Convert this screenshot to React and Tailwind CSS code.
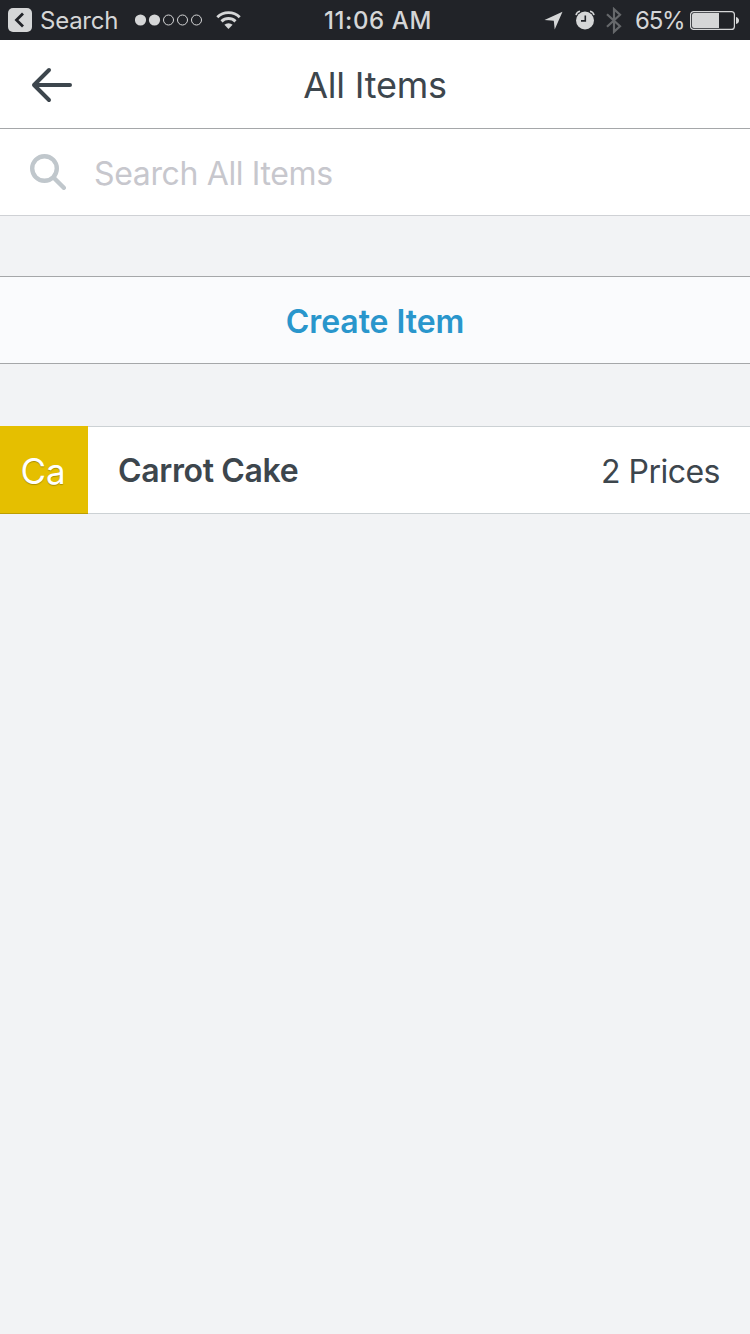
import React from 'react'

const signal = [true, true, false, false, false]

const items = [
  { id: 1, abbr: 'Ca', name: 'Carrot Cake', price: '2 Prices' }
]

function StatusBar() {
  return (
    <div className="flex h-10 items-center bg-[#212328] pl-2 pr-[11px] text-[#d5d6d7]">
      <div className="flex w-[316px] items-center">
        <svg className="h-6 w-6" viewBox="0 0 24 24" fill="none">
          <rect width="24" height="24" rx="5" fill="#d5d6d7" />
          <path d="M15 5.5L8.5 12l6.5 6.5" stroke="#212328" strokeWidth="2.8" />
        </svg>
        <span className="ml-2 w-[78px] whitespace-nowrap pt-px text-2xl leading-10 tracking-[-0.25px]">Search</span>
        <svg className="ml-[17px] h-3 w-[68px]" viewBox="0 0 68 12" fill="none">
          {signal.map((on, i) => (
            <circle
              key={i}
              cx={5.5 + i * 14}
              cy="6"
              r={on ? 5.6 : 5}
              fill={on ? '#d5d6d7' : 'none'}
              stroke={on ? 'none' : '#d5d6d7'}
            />
          ))}
        </svg>
        <svg className="ml-[13px] h-[18px] w-[25px]" viewBox="0 0 25 18" fill="none" stroke="#d5d6d7" strokeWidth="2.9">
          <path d="M1.3 6.2a16 16 0 0 1 22.4 0" />
          <path d="M5.5 10.4a10 10 0 0 1 14 0" />
          <path d="M12.5 18l-4.1-4.2a5.9 5.9 0 0 1 8.2 0z" fill="#d5d6d7" stroke="none" />
        </svg>
      </div>

      <span className="whitespace-nowrap pt-0.5 text-2xl font-medium leading-10 tracking-[0.6px]">11:06 AM</span>

      <div className="ml-auto flex items-center">
        <svg className="h-[19px] w-[19px]" viewBox="0 0 19 19" fill="#d5d6d7">
          <path d="M18.5 .8L10.7 18.6 9.8 9.8 .5 8.9z" />
        </svg>
        <svg className="ml-3 h-5 w-5" viewBox="0 0 20 20" fill="none">
          <circle cx="10" cy="10.5" r="9" fill="#d5d6d7" />
          <path d="M1 5.2A5 5 0 0 1 5 1.3M19 5.2a5 5 0 0 0-4-3.9" stroke="#d5d6d7" strokeWidth="1.5" />
          <path d="M10.3 5.5v5.4H6" stroke="#212328" strokeWidth="1.6" />
        </svg>
        <svg className="ml-[11px] h-[27px] w-4" viewBox="0 0 16 27" fill="none" stroke="#66686b" strokeWidth="2.2">
          <path d="M1 7.2l13 12L8 24.8V2.2l6 5.6-13 12" />
        </svg>
        <span className="ml-[13px] w-[49px] whitespace-nowrap pt-0.5 text-2xl leading-10 tracking-[-1.2px]">65%</span>
        <svg className="ml-[6px] h-[19px] w-[49px]" viewBox="0 0 49 19" fill="none">
          <rect x=".6" y=".6" width="43.8" height="17.8" rx="3" stroke="#d5d6d7" strokeWidth="1.2" />
          <path d="M4 2h25v15H4a2 2 0 0 1-2-2V4a2 2 0 0 1 2-2z" fill="#d5d6d7" />
          <path d="M46 6q3 1 3 3.5T46 13z" fill="#d5d6d7" />
        </svg>
      </div>
    </div>
  )
}

export default function App() {
  return (
    <div className="min-h-screen bg-[#f2f3f5] font-['Inter',sans-serif] text-[#3d464d]">
      <StatusBar />

      {/* Header */}
      <header className="grid h-[89px] grid-cols-[1fr_auto_1fr] items-center border-b border-[#a5a7a9] bg-white px-[31px]">
        <button type="button" aria-label="Back" className="pt-0.5">
          <svg className="h-9 w-[42px]" viewBox="0 0 42 36" fill="none" stroke="#3d464d" strokeWidth="4" strokeLinecap="round" strokeLinejoin="round">
            <path d="M18 3L3 18l15 15M3 18h36" />
          </svg>
        </button>
        <h1 className="pt-0.5 text-4xl leading-[84px] tracking-[-0.2px]">All Items</h1>
      </header>

      {/* Search */}
      <div className="flex h-[87px] items-center border-b border-[#cfd1d5] bg-white pl-[30px]">
        <svg className="h-9 w-9" viewBox="0 0 36 36" fill="none" stroke="#c0c7cc" strokeWidth="4.4" strokeLinecap="round">
          <circle cx="14.5" cy="14.5" r="12.3" />
          <path d="M24 24l9.8 9.8" />
        </svg>
        <span className="ml-7 pt-1 text-[32px] leading-[82px] tracking-[-0.36px] text-[#c7c7cd]">Search All Items</span>
      </div>

      <button
        type="button"
        className="mt-[60px] flex h-[88px] w-full items-center justify-center border-y border-[#a5a7a9] bg-[#fafbfd] pt-1 text-[32px] font-semibold tracking-[-0.05px] text-[#2996cc]"
      >
        Create Item
      </button>

      {/* Item list */}
      <ul className="mt-[62px]">
        {items.map(item => (
          <li key={item.id} className="flex h-[88px] bg-white">
            <div className="flex w-[88px] items-center justify-center border-b border-[#bd9e00] bg-[#e5bf00] pr-0.5 pt-1 text-[35px] text-white text-shadow-[0_1px_1px_rgb(0_0_0_/_0.25)]">
              {item.abbr}
            </div>
            <div className="flex flex-1 items-center justify-between border-y border-[#ccd1d4] pl-[30px] pr-[30px] text-[32px]">
              <span className="pt-px font-semibold tracking-[-0.35px]">{item.name}</span>
              <span className="pt-1 tracking-[-0.5px]">{item.price}</span>
            </div>
          </li>
        ))}
      </ul>
    </div>
  )
}
